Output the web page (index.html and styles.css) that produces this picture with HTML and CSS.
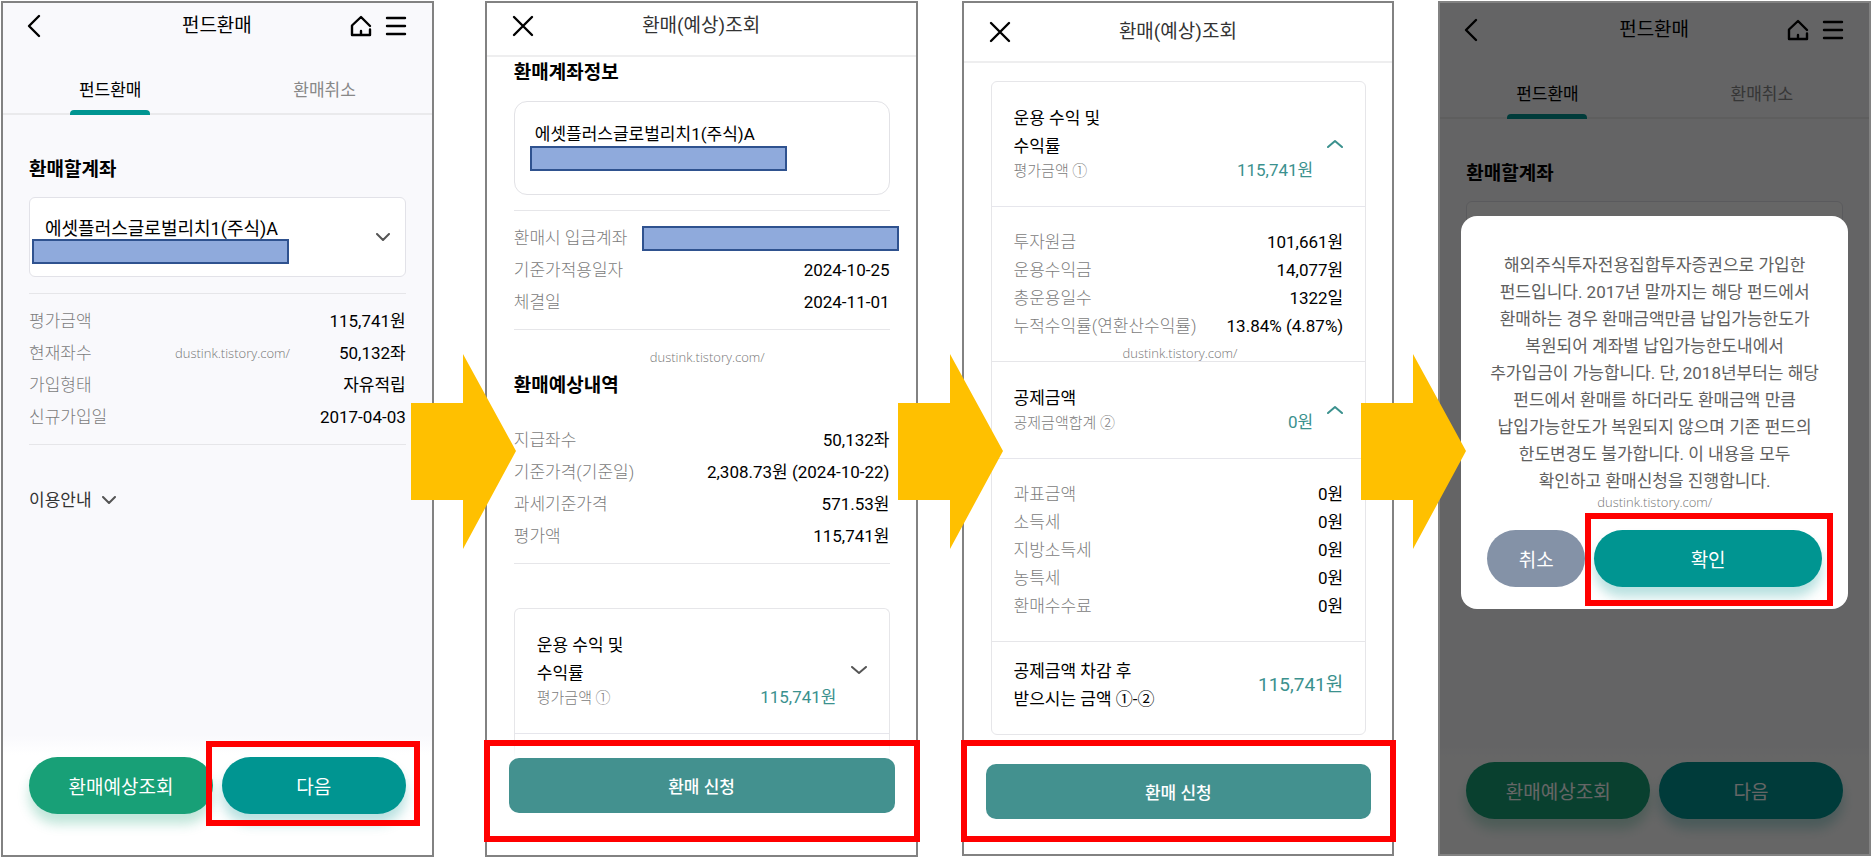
FILE: index.html
```html
<!DOCTYPE html>
<html lang="ko">
<head>
  <meta charset="UTF-8" />
  <meta name="viewport" content="width=device-width, initial-scale=1.0" />
  <title>펀드환매</title>
  <link rel="stylesheet" href="styles.css">
</head>
<body>
<div class="board">

  <!-- 1. 펀드환매 -->
  <section class="phone phone-gray">
    <header class="topbar">
      <button class="icon-btn" type="button" aria-label="뒤로">
        <svg width="20" height="22" viewBox="0 0 20 22"><path d="M11 1L1 11l10 10" /></svg>
      </button>
      <h1 class="title">펀드환매</h1>
      <div class="topbar-right">
        <button class="icon-btn" type="button" aria-label="홈">
          <svg width="20" height="20" viewBox="0 0 20 20"><path d="M19 13.5V19H1V9.5L10 1l9 9M10 15v4" /></svg>
        </button>
        <button class="icon-btn" type="button" aria-label="메뉴">
          <svg width="20" height="20" viewBox="0 0 20 20"><path d="M1 2h18M1 10h18M1 18h18" /></svg>
        </button>
      </div>
    </header>
    <nav class="tabs">
      <a class="tab active" href="#">펀드환매</a>
      <a class="tab" href="#">환매취소</a>
    </nav>

    <div class="content">
      <label class="section-title" for="fund">환매할계좌</label>
      <div class="select-box">
        <select id="fund">
          <option>에셋플러스글로벌리치1(주식)A</option>
        </select>
        <span class="masked"></span>
        <svg class="chevron" width="14" height="8" viewBox="0 0 14 8"><path d="M1 1l6 6 6-6" /></svg>
      </div>

      <dl class="rows line-top line-bottom">
        <div><dt>평가금액</dt><dd>115,741원</dd></div>
        <div><dt>현재좌수</dt><dd>50,132좌</dd></div>
        <div><dt>가입형태</dt><dd>자유적립</dd></div>
        <div><dt>신규가입일</dt><dd>2017-04-03</dd></div>
      </dl>

      <button class="guide" type="button">이용안내
        <svg class="chevron" width="14" height="8" viewBox="0 0 14 8"><path d="M1 1l6 6 6-6" /></svg>
      </button>
    </div>

    <footer class="bottom round">
      <button class="pill green" type="button">환매예상조회</button>
      <div class="target">
        <button class="pill teal" type="button">다음</button>
        <span class="mark mark-next"></span>
      </div>
    </footer>
    <span class="watermark wm-1">dustink.tistory.com/</span>
  </section>

  <div class="step">
    <svg class="arrow arrow-1" width="105" height="195" viewBox="0 0 105 195"><path d="M0 49h52V0l53 97-53 98v-49H0z" /></svg>
  </div>

  <!-- 2. 환매(예상)조회 -->
  <section class="phone">
    <header class="topbar lined">
      <button class="icon-btn" type="button" aria-label="닫기">
        <svg width="20" height="20" viewBox="0 0 20 20"><path d="M1 1l18 18M19 1L1 19" /></svg>
      </button>
      <h1 class="title light">환매(예상)조회</h1>
    </header>

    <div class="content tight">
      <h2 class="section-title">환매계좌정보</h2>
      <div class="account-box">
        <p>에셋플러스글로벌리치1(주식)A</p>
        <span class="masked"></span>
      </div>

      <dl class="rows line-top line-bottom">
        <div><dt>환매시 입금계좌</dt><dd class="masked"></dd></div>
        <div><dt>기준가적용일자</dt><dd>2024-10-25</dd></div>
        <div><dt>체결일</dt><dd>2024-11-01</dd></div>
      </dl>

      <h2 class="section-title second">환매예상내역</h2>
      <dl class="rows line-bottom">
        <div><dt>지급좌수</dt><dd>50,132좌</dd></div>
        <div><dt>기준가격(기준일)</dt><dd>2,308.73원 (2024-10-22)</dd></div>
        <div><dt>과세기준가격</dt><dd>571.53원</dd></div>
        <div><dt>평가액</dt><dd>115,741원</dd></div>
      </dl>

      <div class="card cut">
        <button class="card-head" type="button" aria-expanded="false">
          <span class="card-name">운용 수익 및<br>수익률<small>평가금액 ①</small></span>
          <span class="card-value">115,741원</span>
          <svg class="chevron" width="16" height="9" viewBox="0 0 16 9"><path d="M1 1l7 6 7-6" /></svg>
        </button>
      </div>
    </div>

    <footer class="bottom square">
      <div class="target">
        <button class="apply" type="button">환매 신청</button>
        <span class="mark mark-apply"></span>
      </div>
    </footer>
    <span class="watermark wm-2">dustink.tistory.com/</span>
  </section>

  <div class="step">
    <svg class="arrow arrow-2" width="105" height="195" viewBox="0 0 105 195"><path d="M0 49h52V0l53 97-53 98v-49H0z" /></svg>
  </div>

  <!-- 3. 환매(예상)조회 상세 -->
  <section class="phone low">
    <header class="topbar lined">
      <button class="icon-btn" type="button" aria-label="닫기">
        <svg width="20" height="20" viewBox="0 0 20 20"><path d="M1 1l18 18M19 1L1 19" /></svg>
      </button>
      <h1 class="title light">환매(예상)조회</h1>
    </header>

    <div class="content detail">
      <div class="card">
        <button class="card-head" type="button" aria-expanded="true">
          <span class="card-name">운용 수익 및<br>수익률<small>평가금액 ①</small></span>
          <span class="card-value">115,741원</span>
          <svg class="chevron up" width="16" height="9" viewBox="0 0 16 9"><path d="M1 8l7-6 7 6" /></svg>
        </button>
        <dl class="rows card-rows">
          <div><dt>투자원금</dt><dd>101,661원</dd></div>
          <div><dt>운용수익금</dt><dd>14,077원</dd></div>
          <div><dt>총운용일수</dt><dd>1322일</dd></div>
          <div><dt>누적수익률(연환산수익률)</dt><dd>13.84% (4.87%)</dd></div>
        </dl>
        <button class="card-head" type="button" aria-expanded="true">
          <span class="card-name">공제금액<small>공제금액합계 ②</small></span>
          <span class="card-value">0원</span>
          <svg class="chevron up" width="16" height="9" viewBox="0 0 16 9"><path d="M1 8l7-6 7 6" /></svg>
        </button>
        <dl class="rows card-rows">
          <div><dt>과표금액</dt><dd>0원</dd></div>
          <div><dt>소득세</dt><dd>0원</dd></div>
          <div><dt>지방소득세</dt><dd>0원</dd></div>
          <div><dt>농특세</dt><dd>0원</dd></div>
          <div><dt>환매수수료</dt><dd>0원</dd></div>
        </dl>
        <div class="card-total">
          <span>공제금액 차감 후<br>받으시는 금액 ①-②</span>
          <strong>115,741원</strong>
        </div>
      </div>
    </div>

    <footer class="bottom square">
      <div class="target">
        <button class="apply" type="button">환매 신청</button>
        <span class="mark mark-apply"></span>
      </div>
    </footer>
    <span class="watermark wm-3">dustink.tistory.com/</span>
  </section>

  <div class="step">
    <svg class="arrow arrow-3" width="105" height="195" viewBox="0 0 105 195"><path d="M0 49h52V0l53 97-53 98v-49H0z" /></svg>
  </div>

  <!-- 4. 확인 팝업 -->
  <section class="phone phone-gray low">
    <header class="topbar">
      <button class="icon-btn" type="button" aria-label="뒤로">
        <svg width="20" height="22" viewBox="0 0 20 22"><path d="M11 1L1 11l10 10" /></svg>
      </button>
      <h1 class="title">펀드환매</h1>
      <div class="topbar-right">
        <button class="icon-btn" type="button" aria-label="홈">
          <svg width="20" height="20" viewBox="0 0 20 20"><path d="M19 13.5V19H1V9.5L10 1l9 9M10 15v4" /></svg>
        </button>
        <button class="icon-btn" type="button" aria-label="메뉴">
          <svg width="20" height="20" viewBox="0 0 20 20"><path d="M1 2h18M1 10h18M1 18h18" /></svg>
        </button>
      </div>
    </header>
    <nav class="tabs">
      <a class="tab active" href="#">펀드환매</a>
      <a class="tab" href="#">환매취소</a>
    </nav>
    <div class="content">
      <h2 class="section-title">환매할계좌</h2>
      <div class="select-box"></div>
    </div>
    <footer class="bottom round">
      <button class="pill green" type="button">환매예상조회</button>
      <button class="pill teal" type="button">다음</button>
    </footer>

    <div class="dim">
      <div class="dialog" role="dialog">
        <p>해외주식투자전용집합투자증권으로 가입한<br>
          펀드입니다. 2017년 말까지는 해당 펀드에서<br>
          환매하는 경우 환매금액만큼 납입가능한도가<br>
          복원되어 계좌별 납입가능한도내에서<br>
          추가입금이 가능합니다. 단, 2018년부터는 해당<br>
          펀드에서 환매를 하더라도 환매금액 만큼<br>
          납입가능한도가 복원되지 않으며 기존 펀드의<br>
          한도변경도 불가합니다. 이 내용을 모두<br>
          확인하고 환매신청을 진행합니다.</p>
        <span class="watermark wm-4">dustink.tistory.com/</span>
        <div class="dialog-buttons">
          <button class="pill cancel" type="button">취소</button>
          <div class="target">
            <button class="pill teal" type="button">확인</button>
            <span class="mark mark-ok"></span>
          </div>
        </div>
      </div>
    </div>
  </section>

</div>
</body>
</html>
```
FILE: styles.css
```css
* {
  box-sizing: border-box;
}

body {
  margin: 0;
  background: #fff;
  color: #000;
  font-family: Roboto, "Noto Sans CJK KR", sans-serif;
  font-size: 17px;
}

h1, h2, p, dl, dd {
  margin: 0;
}

button, select {
  font: inherit;
  color: inherit;
  border: 0;
  padding: 0;
  background: none;
  cursor: pointer;
}

svg {
  display: block;
  fill: none;
  stroke: #000;
  stroke-width: 2;
  stroke-linecap: round;
  stroke-linejoin: round;
}

/* 화면 4개 + 화살표 3개 */
.board {
  display: grid;
  grid-template-columns: 1fr 51px 1fr 44px 1fr 44px 1fr;
  min-height: 100vh;
  padding: 1px 0 0 1px;
}

.phone {
  position: relative;
  display: flex;
  flex-direction: column;
  border: 2px solid #828282;
  background: #fff;
}

.phone-gray {
  background: #f9f9fc;
}

.low {
  margin-bottom: 1px;
}

/* 화살표 */
.step {
  position: relative;
  z-index: 2;
}

.arrow {
  position: absolute;
  top: 353px;
  fill: #ffc000;
  stroke: none;
}

.arrow-1 { left: -23px; }
.arrow-2 { left: -20px; }
.arrow-3 { left: -33px; }

/* 상단바 */
.topbar {
  display: grid;
  grid-template-columns: 60px 1fr 60px;
  align-items: center;
  min-height: 46px;
  padding: 0 26px 0 25px;
}

.topbar.lined {
  min-height: 54px;
  padding: 0 26px 6px;
  border-bottom: 2px solid #eeeeef;
}

.low .topbar {
  min-height: 50px;
  padding-top: 4px;
}

.low .topbar.lined {
  min-height: 60px;
  padding-top: 6px;
}

.icon-btn svg {
  overflow: visible;
  stroke-width: 2.4;
}

.title {
  font-size: 19px;
  font-weight: 400;
  line-height: 28px;
  text-align: center;
}

.title.light {
  color: #333;
}

.topbar-right {
  display: flex;
  justify-content: flex-end;
  gap: 15px;
}

/* 탭 */
.tabs {
  display: grid;
  grid-template-columns: 1fr 1fr;
  border-bottom: 2px solid #eaeaec;
}

.tab {
  position: relative;
  padding: 28px 0 10px;
  color: #888;
  line-height: 26px;
  text-align: center;
  text-decoration: none;
}

.tab.active {
  color: #000;
}

.tab.active::after {
  content: "";
  position: absolute;
  left: 50%;
  bottom: -2px;
  width: 80px;
  height: 5px;
  margin-left: -40px;
  border-radius: 4px 4px 0 0;
  background: #009591;
}

/* 본문 */
.content {
  flex: 1;
  display: flex;
  flex-direction: column;
  padding: 41px 26px 0;
}

.content.tight {
  padding: 2px 26px 0 27px;
}

.content.detail {
  padding: 18px 26px 0 27px;
}

.section-title {
  font-size: 19px;
  font-weight: 700;
  line-height: 28px;
}

.section-title.second {
  margin: 42px 0 13px;
}

.select-box {
  position: relative;
  height: 80px;
  margin: 13px 0 16px;
  border: 1px solid #e2e2e8;
  border-radius: 6px;
  background: #fff;
}

.select-box select {
  appearance: none;
  width: 100%;
  height: 100%;
  padding: 0 50px 18px 15px;
  font-size: 18px;
}

.masked {
  width: 257px;
  height: 25px;
  border: 2px solid #2f528f;
  background: #8faadc;
}

.select-box .masked {
  position: absolute;
  left: 2px;
  top: 41px;
}

.select-box .chevron {
  position: absolute;
  right: 15px;
  top: 35px;
}

.chevron {
  stroke: #555;
}

.chevron.up {
  stroke: #3b918e;
}

.account-box {
  height: 94px;
  margin: 14px 0 15px;
  padding: 20px 16px 0 15px;
  border: 1px solid #e2e2e6;
  border-radius: 13px;
}

.account-box p {
  padding-left: 5px;
  line-height: 24px;
}

.account-box .masked {
  display: block;
}

/* 내역 */
.rows {
  padding: 11px 0;
  line-height: 32px;
}

.rows div {
  display: flex;
  justify-content: space-between;
  align-items: center;
}

.rows dt {
  color: #7c7c7c;
  font-weight: 300;
}

.rows dd.masked {
  margin-right: -9px;
}

.line-top {
  border-top: 1px solid #e6e6e9;
}

.line-bottom {
  border-bottom: 1px solid #e6e6e9;
}

.guide {
  display: flex;
  align-items: center;
  gap: 10px;
  margin-top: 41px;
  color: #333;
  line-height: 28px;
}

/* 수익 / 공제 카드 */
.card {
  border: 1px solid #e6e6e9;
  border-radius: 6px;
}

.card.cut {
  flex: 1;
  margin-top: 44px;
  border-bottom: 0;
  border-radius: 6px 6px 0 0;
}

.card-head {
  display: grid;
  grid-template-columns: 1fr auto 16px;
  align-items: center;
  column-gap: 14px;
  width: 100%;
  padding: 22px 22px 24px;
  border-bottom: 1px solid #e6e6ec;
  line-height: 28px;
  text-align: left;
}

.card-name small {
  display: block;
  color: #7c7c7c;
  font-size: 15px;
  font-weight: 300;
  line-height: 22px;
}

.card-value {
  align-self: end;
  color: #3b918e;
  line-height: 24px;
}

.card-rows {
  padding: 21px 22px;
  border-bottom: 1px solid #e6e6e9;
  line-height: 28px;
}

.card-total {
  display: flex;
  justify-content: space-between;
  align-items: center;
  padding: 15px 22px 21px;
  line-height: 28px;
}

.card-total strong {
  color: #3b918e;
  font-size: 19px;
  font-weight: 400;
}

/* 하단 버튼 */
.bottom {
  display: flex;
  gap: 9px;
}

.bottom.round {
  padding: 22px 26px 41px;
  background: linear-gradient(#f9f9fc, #fff 20px);
}

.low .bottom.round {
  padding-bottom: 35px;
}

.bottom.square {
  margin-top: -18px;
  padding: 18px 21px 42px 22px;
  background: linear-gradient(rgba(255, 255, 255, 0.2), #fff 18px);
}

.low .bottom.square {
  padding-bottom: 35px;
}

.bottom > * {
  flex: 1;
}

.target {
  position: relative;
}

.target button {
  width: 100%;
}

.pill {
  height: 57px;
  border-radius: 29px;
  color: #fff;
  font-size: 19px;
}

.pill.green {
  background: #18a077;
  box-shadow: 0 10px 12px rgba(24, 160, 119, 0.28);
}

.pill.teal {
  background: #009591;
  box-shadow: 0 10px 12px rgba(0, 149, 145, 0.28);
}

.pill.cancel {
  width: 98px;
  background: #8492a7;
}

.apply {
  height: 55px;
  border-radius: 10px;
  background: #43918f;
  color: #fff;
  font-weight: 500;
}

/* 빨간 강조 테두리 */
.mark {
  position: absolute;
  z-index: 1;
  border: 6px solid #f00;
  pointer-events: none;
}

.mark-next { inset: -16px -14px -12px -16px; }
.mark-apply { inset: -18px -25px -29px; }
.low .mark-apply { inset: -24px -25px -23px; }
.mark-ok { inset: -17px -11px -19px -9px; }

/* 팝업 */
.dim {
  position: absolute;
  inset: 0;
  padding: 213px 21px 0;
  background: rgba(0, 0, 0, 0.6);
}

.dialog {
  position: relative;
  padding: 36px 26px 22px;
  border-radius: 16px;
  background: #fff;
}

.dialog p {
  color: #606060;
  line-height: 27px;
  text-align: center;
  white-space: nowrap;
}

.dialog-buttons {
  display: flex;
  gap: 9px;
  margin-top: 35px;
}

.dialog-buttons .target {
  flex: 1;
}

/* 워터마크 */
.watermark {
  position: absolute;
  color: #777;
  font-family: "Open Sans", "Noto Sans", sans-serif;
  font-size: 13px;
  font-weight: 300;
  line-height: 18px;
}

.wm-1 { left: 172px; top: 341px; }
.wm-2 { left: 163px; top: 345px; }
.wm-3 { left: 159px; top: 341px; }
.wm-4 { left: 136px; top: 277px; }
```
